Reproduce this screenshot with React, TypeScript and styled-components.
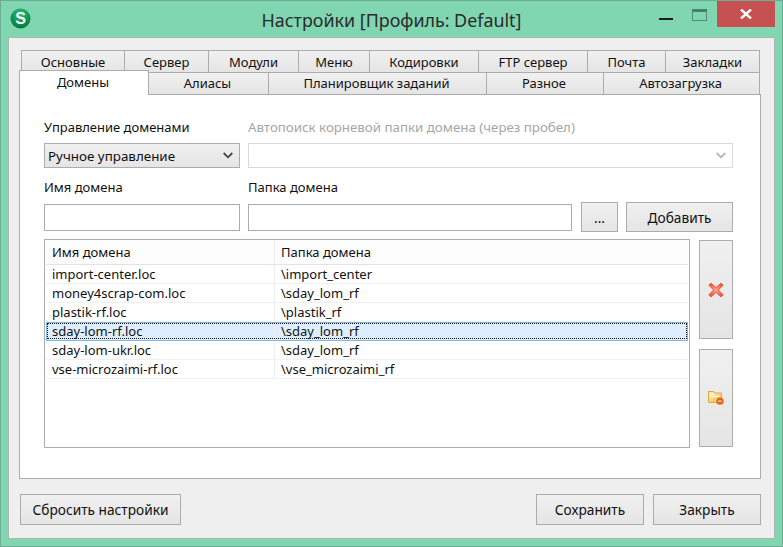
import React from "react";
import styled, { createGlobalStyle } from "styled-components";

const Global = createGlobalStyle`
  html, body { margin: 0; padding: 0; width: 783px; height: 547px; overflow: hidden; background: #80d6b0; }
  * { box-sizing: border-box; }
  body { font-family: "Noto Sans", "Open Sans", sans-serif; font-size: 13px; color: #111; }
`;

const Win = styled.div`
  width: 783px; height: 547px; display: flex; flex-direction: column;
  background: #80d6b0; border: 1px solid #6cae93; padding: 0 7px 7px 7px; position: relative;
`;
const TitleBar = styled.div`
  height: 36px; flex: none; display: flex; align-items: center; justify-content: center; position: relative;
`;
const AppIcon = styled.svg`position: absolute; left: 2px; top: 7px;`;
const Title = styled.div`font-size: 17.9px; color: #2b2b2b; position: relative; top: 1px; left: 0;`;
const Controls = styled.div`position: absolute; right: 0; top: 0; display: flex; align-items: flex-start;`;
const Minimize = styled.div`width: 14px; height: 2px; background: #1c1c1c; margin: 17px 19px 0 0;`;
const Maximize = styled.div`width: 15px; height: 12px; border: 1px solid #4f8e76; border-top-width: 3px; margin: 8px 10px 0 0; border-top-color: #44806a;`;
const Close = styled.div`
  width: 58px; height: 26px; background: #c75050; display: flex; align-items: center; justify-content: center;
`;
const Client = styled.div`
  flex: 1; background: #efefef; border: 1px solid #a9b5b0; padding: 12px 12px 12px 10px;
  display: flex; flex-direction: column;
`;
const TabRow = styled.div<{ $first?: boolean }>`
  display: flex; height: 22px; padding-left: ${p => (p.$first ? 2 : 0)}px; flex: none;
`;
const Tab = styled.div<{ $w: number; $active?: boolean; $first?: boolean }>`
  width: ${p => p.$w}px; flex: none; display: flex; align-items: center; justify-content: center;
  background: linear-gradient(#f0f0f0, #e5e5e5);
  border: 1px solid #acacac; border-bottom: none; margin-right: -1px;
  padding-bottom: ${p => (p.$first ? 0 : 1)}px; padding-right: ${p => (p.$first ? 0 : 2)}px;
  position: relative;
  ${p => p.$active ? `
    background: #fff; height: 25px; margin-top: -2px; z-index: 2; padding-top: 0; padding-bottom: 3px;
  ` : ""}
`;
const Panel = styled.div`
  flex: none; height: 385px; width: 742px; background: #fff; border: 1px solid #acacac; margin-top: 0;
  padding: 23px 27px 0 24px; display: flex; flex-direction: column; position: relative;
`;
const LabelRow = styled.div<{ $gap: number }>`
  display: flex; gap: 8px; height: 18px; align-items: center; margin-top: ${p => p.$gap}px; flex: none;
`;
const Label = styled.div<{ $w?: number; $muted?: boolean }>`
  width: ${p => (p.$w ? p.$w + "px" : "auto")}; flex: none; white-space: nowrap;
  color: ${p => (p.$muted ? "#a6a6a6" : "#111")};
  font-size: ${p => (p.$muted ? 13.3 : 13)}px;
`;
const SelectRow = styled.div`display: flex; gap: 8px; margin-top: 7px; flex: none;`;
const Select = styled.div<{ $w: number; $disabled?: boolean }>`
  width: ${p => p.$w}px; height: 25px; display: flex; align-items: center; justify-content: space-between;
  padding: 0 6px 0 3px; font-size: 13.4px;
  background: ${p => (p.$disabled ? "#fff" : "linear-gradient(#f0f0f0, #e5e5e5)")};
  border: 1px solid ${p => (p.$disabled ? "#d9d9d9" : "#acacac")};
`;
const InputRow = styled.div`display: flex; align-items: center; height: 30px; margin-top: 6px; flex: none;`;
const Input = styled.div<{ $w: number; $gap: number }>`
  width: ${p => p.$w}px; height: 27px; background: #fff; border: 1px solid #acacac; margin-right: ${p => p.$gap}px; flex: none;
`;
const Btn = styled.div<{ $w: number; $h?: number }>`
  width: ${p => p.$w}px; height: ${p => p.$h ?? 30}px; flex: none; display: flex; align-items: center; justify-content: center;
  background: linear-gradient(#f0f0f0, #e5e5e5); border: 1px solid #acacac; font-size: 13.7px;
`;
const ListRow = styled.div`display: flex; gap: 9px; margin-top: 7px; flex: none;`;
const List = styled.div`
  width: 646px; height: 209px; border: 1px solid #acacac; background: #fff; padding: 0 1px 0 1px; flex: none;
`;
const Row = styled.div<{ $head?: boolean; $sel?: boolean }>`
  display: grid; grid-template-columns: 228px 1fr; height: 19px; width: 642px; align-items: center;
  border-bottom: 1px solid #f0f0f0;
  position: relative;
  ${p => p.$head ? "background: #fdfdfd; height: 25px; border-bottom-color: #e3e3e3;" : ""}
  ${p => p.$sel ? `background: #deeeff; outline: 1px solid #7db7ec; outline-offset: -1px; border-bottom-color: transparent;` : ""}
`;
const Focus = styled.div`
  position: absolute; inset: 1px; border: 1px dotted #111; pointer-events: none;
`;
const Cell = styled.div<{ $second?: boolean }>`
  padding-left: 6px; height: 100%; display: flex; align-items: center; white-space: nowrap;
  ${p => (p.$second ? "border-left: 1px solid #eeeeee;" : "")}
`;
const Side = styled.div`display: flex; flex-direction: column; gap: 10px; padding-top: 1px;`;
const Footer = styled.div`display: flex; align-items: center; margin: 15px 0 0 1px; flex: none; width: 741px;`;
const Spacer = styled.div`flex: 1;`;
const Gap = styled.div<{ $w: number }>`width: ${p => p.$w}px; flex: none;`;

const Chevron = ({ color }: { color: string }) => (
  <svg width="10" height="7" viewBox="0 0 10 7"><path d="M0.7 1 L5 5.3 L9.3 1" fill="none" stroke={color} strokeWidth="1.8" /></svg>
);

const rows: [string, string][] = [
  ["import-center.loc", "\\import_center"],
  ["money4scrap-com.loc", "\\sday_lom_rf"],
  ["plastik-rf.loc", "\\plastik_rf"],
  ["sday-lom-rf.loc", "\\sday_lom_rf"],
  ["sday-lom-ukr.loc", "\\sday_lom_rf"],
  ["vse-microzaimi-rf.loc", "\\vse_microzaimi_rf"],
];

const tabs1: [string, number][] = [["Основные", 104], ["Сервер", 85], ["Модули", 91], ["Меню", 72], ["Кодировки", 110], ["FTP сервер", 110], ["Почта", 79], ["Закладки", 95]];
const tabs2: [string, number][] = [["Домены", 130], ["Алиасы", 121], ["Планировщик заданий", 219], ["Разное", 118], ["Автозагрузка", 157]];

export default function App() {
  return (
    <Win>
      <Global />
      <TitleBar>
        <AppIcon width="21" height="21" viewBox="0 0 21 21">
          <defs>
            <radialGradient id="g" cx="0.5" cy="0.25" r="0.8">
              <stop offset="0" stopColor="#2dbb78" />
              <stop offset="0.6" stopColor="#0c9450" />
              <stop offset="1" stopColor="#046f38" />
            </radialGradient>
          </defs>
          <circle cx="10.5" cy="10.5" r="10" fill="url(#g)" />
          <text x="10.5" y="16" textAnchor="middle" fontFamily="'Liberation Sans', sans-serif" fontWeight="700" fontSize="16" fill="#fff">S</text>
        </AppIcon>
        <Title>Настройки [Профиль: Default]</Title>
        <Controls>
          <Minimize />
          <Maximize />
          <Close>
            <svg width="12" height="10" viewBox="0 0 12 10"><path d="M1 0.5 L11 9.5 M11 0.5 L1 9.5" stroke="#fff" strokeWidth="2.4" /></svg>
          </Close>
        </Controls>
      </TitleBar>
      <Client>
        <TabRow $first>
          {tabs1.map(([t, w]) => <Tab key={t} $w={w} $first>{t}</Tab>)}
        </TabRow>
        <TabRow>
          {tabs2.map(([t, w], i) => <Tab key={t} $w={w} $active={i === 0}>{t}</Tab>)}
        </TabRow>
        <Panel>
          <LabelRow $gap={0}>
            <Label $w={196}>Управление доменами</Label>
            <Label $muted>Автопоиск корневой папки домена (через пробел)</Label>
          </LabelRow>
          <SelectRow>
            <Select $w={196}>Ручное управление<Chevron color="#444" /></Select>
            <Select $w={486} $disabled><span /><Chevron color="#b5b5b5" /></Select>
          </SelectRow>
          <LabelRow $gap={10}>
            <Label $w={196}>Имя домена</Label>
            <Label>Папка домена</Label>
          </LabelRow>
          <InputRow>
            <Input $w={196} $gap={8} />
            <Input $w={324} $gap={9} />
            <Btn $w={37}>...</Btn>
            <Gap $w={8} />
            <Btn $w={107}>Добавить</Btn>
          </InputRow>
          <ListRow>
            <List>
              <Row $head><Cell>Имя домена</Cell><Cell $second>Папка домена</Cell></Row>
              {rows.map(([a, b], i) => (
                <Row key={a} $sel={i === 3}>
                  <Cell>{a}</Cell><Cell $second>{b}</Cell>
                  {i === 3 && <Focus />}
                </Row>
              ))}
            </List>
            <Side>
              <Btn $w={34} $h={99}>
                <svg width="16" height="16" viewBox="0 0 16 16">
                  <defs>
                    <radialGradient id="x" cx="0.5" cy="0.5" r="0.5">
                      <stop offset="0" stopColor="#ffa48c" />
                      <stop offset="1" stopColor="#f45a3c" />
                    </radialGradient>
                  </defs>
                  <path d="M3 1 L8 5.6 L13 1 L15.2 3.2 L10.4 8 L15.2 12.8 L13 15 L8 10.4 L3 15 L0.8 12.8 L5.6 8 L0.8 3.2 Z" fill="url(#x)" stroke="#d8402a" strokeWidth="0.7" />
                </svg>
              </Btn>
              <Btn $w={34} $h={98}>
                <svg width="16" height="14" viewBox="0 0 16 14">
                  <defs>
                    <linearGradient id="f" x1="0" y1="0" x2="0.6" y2="1">
                      <stop offset="0" stopColor="#fdf0bd" />
                      <stop offset="1" stopColor="#f3c65e" />
                    </linearGradient>
                  </defs>
                  <path d="M0.5 0.5 H6 L7 2 H13.5 V11.5 H0.5 Z" fill="url(#f)" stroke="#d9a94a" />
                  <path d="M2 3.5 H7 M2 5.5 H12" stroke="#fffbe6" />
                  <circle cx="12" cy="10.2" r="3.6" fill="#e8640f" />
                  <path d="M10.2 10.2 H13.8" stroke="#fff" />
                </svg>
              </Btn>
            </Side>
          </ListRow>
        </Panel>
        <Footer>
          <Btn $w={161} $h={31}>Сбросить настройки</Btn>
          <Spacer />
          <Btn $w={108} $h={31}>Сохранить</Btn>
          <Gap $w={9} />
          <Btn $w={108} $h={31}>Закрыть</Btn>
        </Footer>
      </Client>
    </Win>
  );
}
